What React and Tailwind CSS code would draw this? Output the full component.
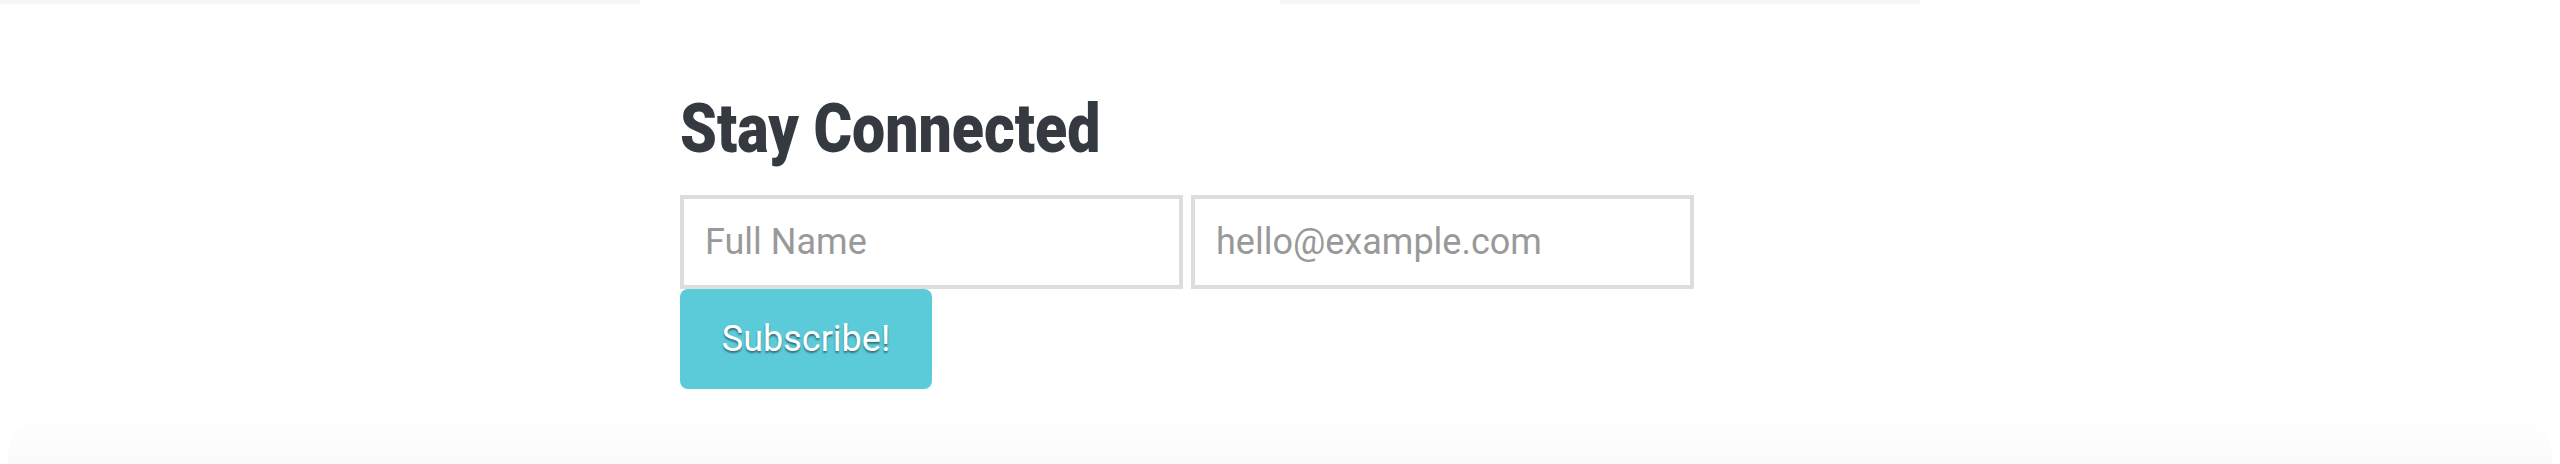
import React from 'react'

const App = () => {
  return (
    <div className="w-[2560px] h-[464px] flex flex-col bg-white font-['Roboto','Liberation_Sans',sans-serif]">
      {/* top stripes */}
      <div className="flex h-1 shrink-0">
        <div className="w-[640px] bg-[#f7f7f7]" />
        <div className="w-[640px] bg-white" />
        <div className="w-[640px] bg-[#f7f7f7]" />
        <div className="w-[640px] bg-white" />
      </div>

      <div className="w-[1200px] mx-auto pt-[99px]">
        <h2 className="inline-block text-[59px] leading-none font-black text-[#343a40] origin-bottom scale-y-[1.15]">
          Stay Connected
        </h2>
        <form className="mt-[33px]">
          <div className="flex gap-2">
            <input
              type="text"
              placeholder="Full Name"
              className="w-[503px] h-[94px] border-4 border-[#dddddd] bg-white px-[21px] text-[36px] text-[#333] placeholder:text-[#999] outline-none"
            />
            <input
              type="email"
              placeholder="hello@example.com"
              className="w-[503px] h-[94px] border-4 border-[#dddddd] bg-white px-[21px] text-[36px] text-[#333] placeholder:text-[#999] outline-none"
            />
          </div>
          <button
            type="button"
            className="w-[252px] h-[100px] rounded-lg bg-[#5ccbd9] text-white text-[36px] [text-shadow:0_2px_2px_rgba(0,0,0,0.45)]"
          >
            Subscribe!
          </button>
        </form>
      </div>

      <div className="mt-auto h-[48px] mx-2 rounded-t-[40px] bg-linear-to-b from-white to-[#fafafa]" />
    </div>
  )
}

export default App
